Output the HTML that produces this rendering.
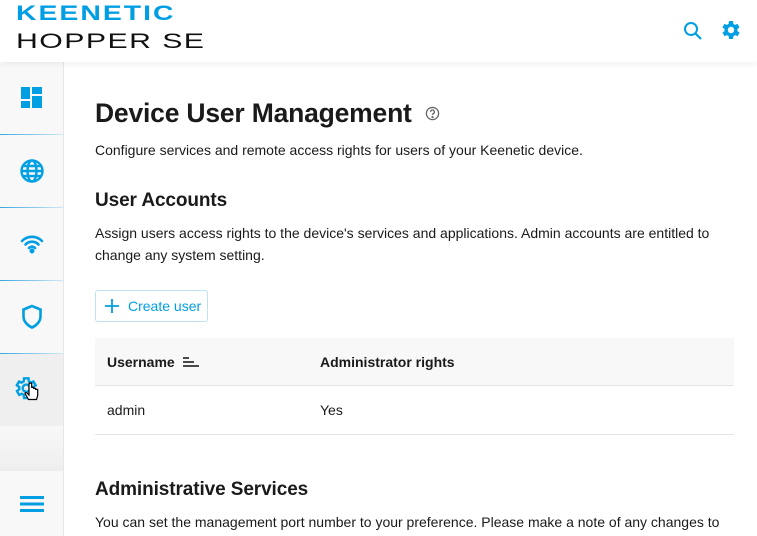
<!DOCTYPE html>
<html><head><meta charset="utf-8"><style>
*{margin:0;padding:0;box-sizing:border-box}
body{width:757px;height:536px;overflow:hidden;font-family:"Liberation Sans",Roboto,sans-serif;background:#fff;color:#1a1a1a;position:relative}
.hdr{position:absolute;left:0;top:0;width:757px;height:62px;background:#fff;box-shadow:0 2px 6px rgba(0,0,0,.06);z-index:2}
.k{position:absolute;left:16px;top:2px;font:900 21px "Liberation Sans",sans-serif;color:#009fe3;letter-spacing:1.5px;transform:scaleX(1.35);transform-origin:left}
.h{position:absolute;left:16px;top:30px;font:400 21px "Liberation Sans",sans-serif;color:#111;letter-spacing:1px;transform:scaleX(1.44);transform-origin:left}
.side{position:absolute;left:0;top:62px;width:64px;height:474px;background:#f8f8f8;border-right:1px solid #e6e6e6}
.it{position:absolute;left:0;width:63px;height:72px;display:flex;align-items:center;justify-content:center}
.sep{position:absolute;left:0;width:63px;height:1px;background:linear-gradient(90deg,#3aa7e0,#cfe9f7)}
h1{position:absolute;left:95px;top:98px;font-size:26.5px;font-weight:700;white-space:nowrap;letter-spacing:-0.2px}
h2{position:absolute;left:95px;font-size:19px;font-weight:700;white-space:nowrap;letter-spacing:-0.1px}
p{position:absolute;left:95px;font-size:14px;line-height:22px;width:640px}
</style></head><body>
<div class="hdr">
<div class="k">KEENETIC</div>
<div class="h">HOPPER SE</div>
<svg style="position:absolute;left:683px;top:21px" width="20" height="20" viewBox="0 0 20 20"><circle cx="8" cy="8" r="6" fill="none" stroke="#009fe3" stroke-width="2"/><path d="M12.5 12.5L18 18" stroke="#009fe3" stroke-width="2.2"/></svg>
<svg style="position:absolute;left:719px;top:18px" width="24" height="24" viewBox="0 0 24 24"><path fill="#009fe3" d="M19.4 13a7.5 7.5 0 000-2l2.1-1.6-2-3.5-2.5 1a7 7 0 00-1.7-1L15 3h-4l-.4 2.9a7 7 0 00-1.7 1l-2.5-1-2 3.5L6.6 11a7.5 7.5 0 000 2l-2.1 1.6 2 3.5 2.5-1a7 7 0 001.7 1L11 21h4l.4-2.9a7 7 0 001.7-1l2.5 1 2-3.5zM13 15.2a3.2 3.2 0 110-6.4 3.2 3.2 0 010 6.4z" transform="translate(-1 0)"/></svg>
</div>
<div class="side">
<div class="it" style="top:0"><svg width="24" height="24" viewBox="0 0 24 24"><rect x="1" y="1" width="9" height="12" fill="#009fe3"/><rect x="12" y="1" width="10" height="7" fill="#009fe3"/><rect x="1" y="15" width="9" height="7" fill="#009fe3"/><rect x="12" y="10" width="10" height="12" fill="#009fe3"/></svg></div>
<div class="sep" style="top:72px"></div>
<div class="it" style="top:73px"><svg width="26" height="26" viewBox="0 0 26 26" fill="none" stroke="#009fe3" stroke-width="2.4"><circle cx="13" cy="13" r="10.5"/><ellipse cx="13" cy="13" rx="4.5" ry="10.5"/><path d="M3 13h20M4.5 8h17M4.5 18h17"/></svg></div>
<div class="sep" style="top:145px"></div>
<div class="it" style="top:146px"><svg width="24" height="20" viewBox="0 0 24 20" fill="none" stroke="#009fe3" stroke-width="2.6" stroke-linecap="round"><path d="M2 7a14 14 0 0120 0M5.5 10.5a9 9 0 0113 0M9 14a4 4 0 016 0"/><circle cx="12" cy="17" r="1.2" fill="#009fe3"/></svg></div>
<div class="sep" style="top:218px"></div>
<div class="it" style="top:219px"><svg width="22" height="26" viewBox="0 0 22 26" fill="none" stroke="#009fe3" stroke-width="2.6"><path d="M11 2L2.5 5.5v7c0 5 4 9 8.5 11 4.5-2 8.5-6 8.5-11v-7z"/></svg></div>
<div class="sep" style="top:291px"></div>
<div class="it" style="top:292px;background:#efefef"></div>
<div style="position:absolute;top:364px;left:0;width:63px;height:45px;background:linear-gradient(#f8f8f8,#eee)"></div>
<svg style="position:absolute;left:12px;top:312px" width="36" height="36" viewBox="0 0 36 36"><g transform="translate(0 1) scale(1.1)"><path fill="none" stroke="#009fe3" stroke-width="2.2" d="M19.4 13a7.5 7.5 0 000-2l2.1-1.6-2-3.5-2.5 1a7 7 0 00-1.7-1L15 3h-4l-.4 2.9a7 7 0 00-1.7 1l-2.5-1-2 3.5L6.6 11a7.5 7.5 0 000 2l-2.1 1.6 2 3.5 2.5-1a7 7 0 001.7 1L11 21h4l.4-2.9a7 7 0 001.7-1l2.5 1 2-3.5z"/><circle cx="13" cy="12" r="3.3" fill="none" stroke="#009fe3" stroke-width="2.2"/></g><path d="M17 10v11l-2-2c-1-1-2.3 0-1.7 1l3.2 5.5h8l1.2-4v-5.5c0-1-2-1-2 0v-1c0-1-2-1-2 0v-1c0-1-2-1-2 0V10c0-1.3-2.7-1.3-2.7 0z" fill="#fff" stroke="#000" stroke-width="1.2"/></svg>
<div class="it" style="top:409px;height:65px"><svg width="24" height="18" viewBox="0 0 24 18"><rect y="1" width="24" height="3" fill="#009fe3"/><rect y="7.5" width="24" height="3" fill="#009fe3"/><rect y="14" width="24" height="3" fill="#009fe3"/></svg></div>
</div>
<h1>Device User Management</h1>
<svg style="position:absolute;left:425px;top:106px" width="15" height="15" viewBox="0 0 16 16" fill="none" stroke="#666" stroke-width="1.4"><circle cx="8" cy="8" r="6.5"/><path d="M6 6.3a2 2 0 113 1.7c-.8.4-1 .8-1 1.6"/><circle cx="8" cy="11.8" r=".5" fill="#666"/></svg>
<p style="top:139px">Configure services and remote access rights for users of your Keenetic device.</p>
<h2 style="top:190px">User Accounts</h2>
<p style="top:222px">Assign users access rights to the device's services and applications. Admin accounts are entitled to change any system setting.</p>
<div style="position:absolute;left:95px;top:290px;width:113px;height:32px;border:1px solid #bfe2f3;border-radius:3px;color:#009fe3;font-size:14px;line-height:30px;padding-left:32px">Create user</div>
<svg style="position:absolute;left:104px;top:298px" width="16" height="16"><path d="M8 1v14M1 8h14" stroke="#009fe3" stroke-width="1.8"/></svg>
<div style="position:absolute;left:95px;top:338px;width:639px;height:48px;background:#f8f8f8;border-bottom:1px solid #e4e4e4"></div>
<div style="position:absolute;left:107px;top:354px;font-size:14px;font-weight:700">Username</div>
<svg style="position:absolute;left:182px;top:355px" width="18" height="14"><path d="M1 3h6M1 7h11M1 11h16" stroke="#111" stroke-width="1.6"/></svg>
<div style="position:absolute;left:320px;top:354px;font-size:14px;font-weight:700">Administrator rights</div>
<div style="position:absolute;left:107px;top:402px;font-size:14px">admin</div>
<div style="position:absolute;left:320px;top:402px;font-size:14px">Yes</div>
<div style="position:absolute;left:95px;top:434px;width:639px;height:1px;background:#e4e4e4"></div>
<h2 style="top:479px">Administrative Services</h2>
<p style="top:511px;white-space:nowrap">You can set the management port number to your preference. Please make a note of any changes to</p>
</body></html>
